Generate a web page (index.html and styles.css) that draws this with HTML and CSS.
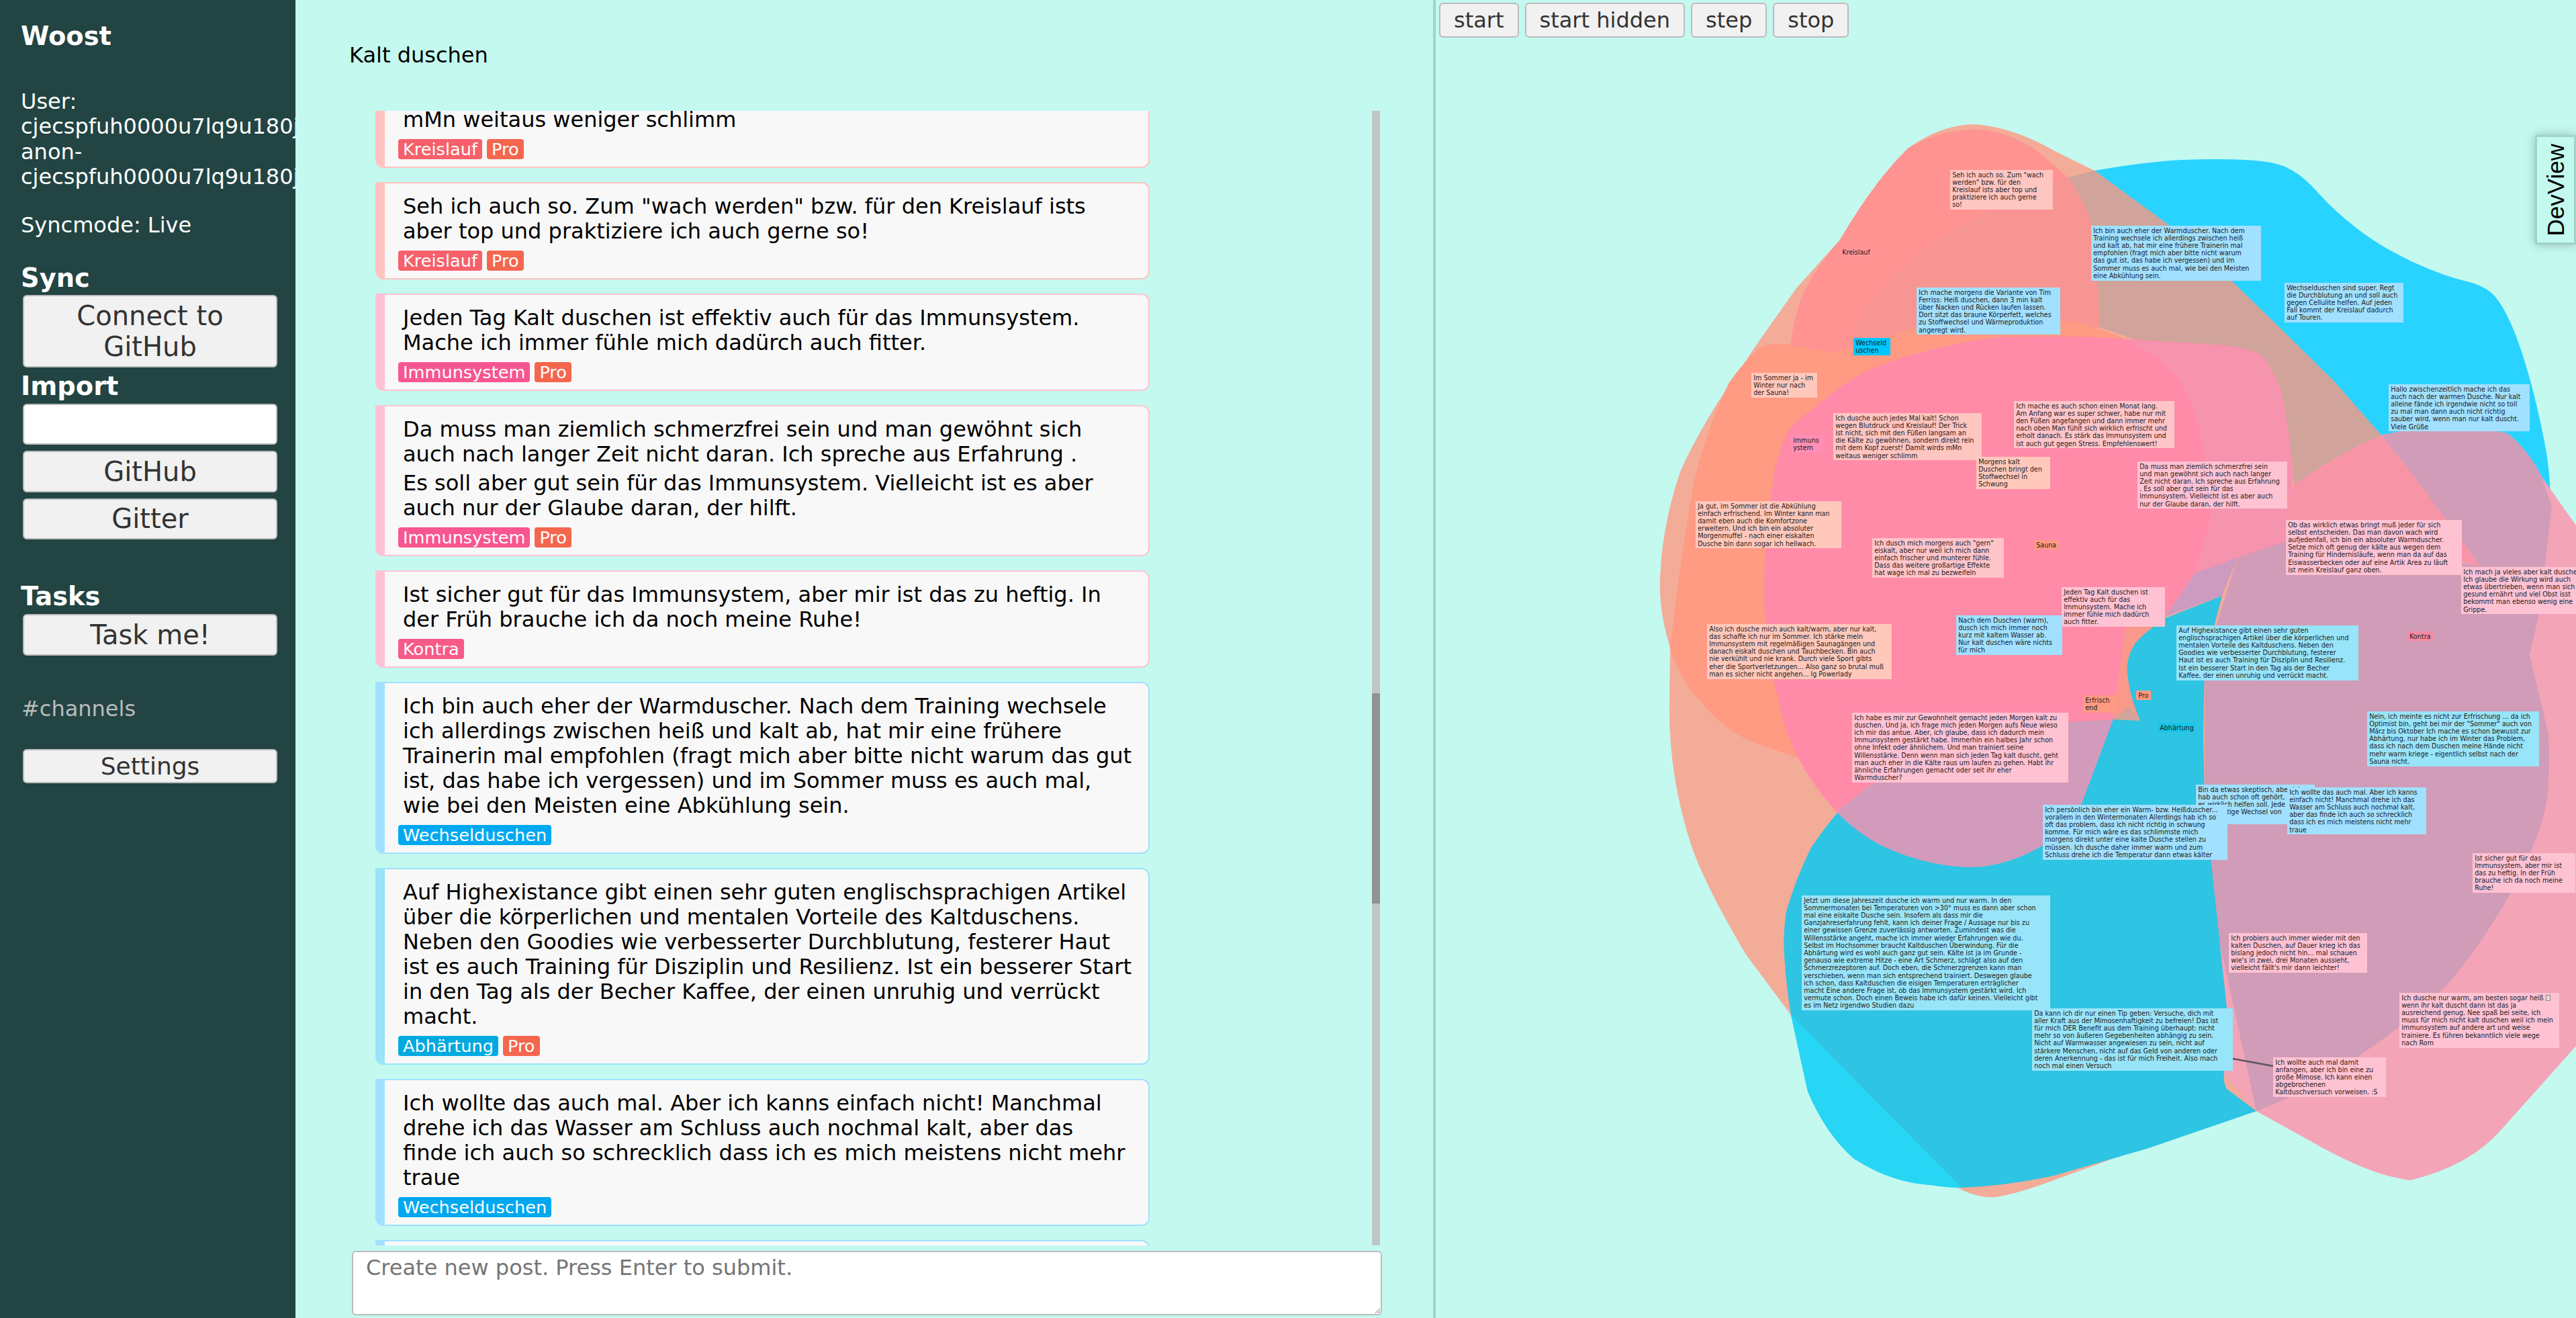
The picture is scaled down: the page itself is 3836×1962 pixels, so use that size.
FILE: index.html
```html
<!DOCTYPE html>
<html lang="de">
<head>
<meta charset="utf-8">
<title>Woost</title>
<link rel="stylesheet" href="styles.css">
</head>
<body>
<div class="app">
  <aside class="sidebar">
    <h1 class="brand">Woost</h1>
    <div class="user">User:<br>cjecspfuh0000u7lq9u180j<br>anon-<br>cjecspfuh0000u7lq9u180j</div>
    <div class="syncmode">Syncmode: Live</div>
    <h2 class="side-title title-sync">Sync</h2>
    <button class="btn side-btn">Connect to GitHub</button>
    <h2 class="side-title title-import">Import</h2>
    <div class="import-stack">
      <input class="side-input" type="text">
      <button class="btn side-btn">GitHub</button>
      <button class="btn side-btn">Gitter</button>
    </div>
    <h2 class="side-title title-tasks">Tasks</h2>
    <button class="btn side-btn">Task me!</button>
    <div class="channels">#channels</div>
    <button class="btn side-btn settings">Settings</button>
  </aside>

  <main class="chat">
    <header class="chat-head">Kalt duschen</header>
    <div class="thread">
      <div class="posts">
        <article class="post post-red post-first">
          <p>Ich dusche auch jedes Mal kalt! Schon wegen Blutdruck und Kreislauf! Der Trick ist nicht, sich mit den Füßen langsam an die Kälte zu gewöhnen, sondern direkt rein mit dem Kopf zuerst! Damit wirds<br>mMn weitaus weniger schlimm</p>
          <div class="tags"><span class="tag t-kreis">Kreislauf</span><span class="tag t-pro">Pro</span></div>
        </article>
        <article class="post post-red">
          <p>Seh ich auch so. Zum "wach werden" bzw. für den Kreislauf ists aber top und praktiziere ich auch gerne so!</p>
          <div class="tags"><span class="tag t-kreis">Kreislauf</span><span class="tag t-pro">Pro</span></div>
        </article>
        <article class="post post-pink">
          <p>Jeden Tag Kalt duschen ist effektiv auch für das Immunsystem. Mache ich immer fühle mich dadürch auch fitter.</p>
          <div class="tags"><span class="tag t-immun">Immunsystem</span><span class="tag t-pro">Pro</span></div>
        </article>
        <article class="post post-pink">
          <p>Da muss man ziemlich schmerzfrei sein und man gewöhnt sich auch nach langer Zeit nicht daran. Ich spreche aus Erfahrung .</p>
          <p>Es soll aber gut sein für das Immunsystem. Vielleicht ist es aber auch nur der Glaube daran, der hilft.</p>
          <div class="tags"><span class="tag t-immun">Immunsystem</span><span class="tag t-pro">Pro</span></div>
        </article>
        <article class="post post-pink">
          <p>Ist sicher gut für das Immunsystem, aber mir ist das zu heftig. In der Früh brauche ich da noch meine Ruhe!</p>
          <div class="tags"><span class="tag t-kontra">Kontra</span></div>
        </article>
        <article class="post post-blue">
          <p>Ich bin auch eher der Warmduscher. Nach dem Training wechsele ich allerdings zwischen heiß und kalt ab, hat mir eine frühere Trainerin mal empfohlen (fragt mich aber bitte nicht warum das gut ist, das habe ich vergessen) und im Sommer muss es auch mal, wie bei den Meisten eine Abkühlung sein.</p>
          <div class="tags"><span class="tag t-wech">Wechselduschen</span></div>
        </article>
        <article class="post post-aqua">
          <p>Auf Highexistance gibt einen sehr guten englischsprachigen Artikel über die körperlichen und mentalen Vorteile des Kaltduschens. Neben den Goodies wie verbesserter Durchblutung, festerer Haut ist es auch Training für Disziplin und Resilienz. Ist ein besserer Start in den Tag als der Becher Kaffee, der einen unruhig und verrückt macht.</p>
          <div class="tags"><span class="tag t-abh">Abhärtung</span><span class="tag t-pro">Pro</span></div>
        </article>
        <article class="post post-blue">
          <p>Ich wollte das auch mal. Aber ich kanns einfach nicht! Manchmal drehe ich das Wasser am Schluss auch nochmal kalt, aber das finde ich auch so schrecklich dass ich es mich meistens nicht mehr traue</p>
          <div class="tags"><span class="tag t-wech">Wechselduschen</span></div>
        </article>
        <article class="post post-blue post-last">
          <p>&nbsp;</p>
        </article>
      </div>
      <div class="scrolltrack"><div class="scrollthumb"></div></div>
    </div>
    <textarea class="composer" placeholder="Create new post. Press Enter to submit."></textarea>
  </main>

  <section class="pane">
    <div class="stage">
      <svg class="hulls" viewBox="0 0 3836 1962" xmlns="http://www.w3.org/2000/svg">
        <path class="h-wech" d="M3100,300 L3119,254 Q3200,240 3250,238 Q3297,236 3344,238 Q3391,240 3410,252 Q3429,261 3452,287 Q3476,314 3511,341 Q3546,368 3593,390 Q3640,411 3670,418 Q3701,425 3715,441 Q3729,457 3743,491 Q3757,525 3771,578 Q3785,632 3793,680 Q3800,729 3797,790 Q3795,850 3781,912 L3767,975 L3300,1000 Z"/>
        <path class="h-peach" d="M2942,185 Q3000,190 3060,225 L3119,254 L3231,336 L3325,420 L3400,493 L3476,568 L3546,648 L3588,700 L3694,843 L3767,975 Q3795,1060 3797,1130 Q3795,1200 3776,1250 Q3760,1290 3743,1321 Q3700,1400 3646,1464 Q3590,1520 3524,1564 Q3450,1620 3360,1654 L3165,1718 L3050,1760 Q3000,1778 2972,1782 Q2930,1785 2880,1745 L2667,1511 L2600,1421 Q2540,1320 2519,1260 Q2486,1160 2486,1057 L2487,964 Q2470,910 2472,861 Q2475,780 2503,700 Q2530,640 2574,575 L2620,507 L2675,429 L2740,357 Q2790,271 2841,221 Q2890,185 2942,185 Z"/>
        <path class="h-tan" d="M3079,264 L3119,254 L3231,336 L3325,420 L3400,493 L3476,568 L3546,648 L3417,721 L3396,579 L3126,487 L3123,436 L3116,340 Z"/>
        <path class="h-salmon" d="M2951,193 Q3000,198 3043,232 L3079,264 Q3105,300 3116,340 Q3125,400 3126,487 L2731,530 L2666,514 Q2672,470 2685,436 Q2710,390 2740,357 Q2790,271 2841,221 Q2895,190 2951,193 Z"/>
        <path class="h-salmon2" d="M2753,517 L2753,507 Q2775,465 2804,428 Q2835,392 2877,364 Q2920,335 2965,311 Q3020,285 3079,264 Q3105,300 3116,340 Q3125,400 3126,487 Z"/>
        <path class="h-orange" d="M2666,514 Q2640,508 2620,518 Q2595,540 2574,571 Q2545,630 2524,710 Q2510,790 2500,860 L2487,964 Q2505,1020 2533,1045 Q2570,1090 2617,1107 L2677,1128 L2800,1000 L3159,936 L3161,503 Q3130,490 3089,479 Q3000,470 2919,475 Q2860,485 2813,500 L2731,525 Z"/>
        <path class="h-lpink" d="M3433,710 Q3490,672 3546,648 Q3640,625 3734,645 Q3765,670 3785,710 L3836,782 L3836,1557 Q3780,1620 3727,1679 Q3680,1735 3589,1757 Q3530,1750 3443,1700 L3360,1654 L3312,1600 L3283,1000 Z"/>
        <path class="h-rose" d="M3417,721 L3433,710 Q3490,672 3546,648 L3588,700 L3694,843 Q3600,815 3500,808 Q3440,805 3400,807 L3332,830 Z"/>
        <path class="h-purple" d="M3546,648 Q3640,625 3734,645 Q3765,670 3785,710 L3800,754 L3781,914 L3767,975 L3795,1093 Q3797,1130 3795,1164 Q3795,1200 3776,1250 Q3760,1290 3743,1321 Q3700,1400 3646,1464 Q3590,1520 3524,1564 Q3450,1620 3360,1654 L3283,1300 L3283,986 L3332,830 L3400,807 Q3500,808 3694,843 L3588,700 Z"/>
        <path class="h-hot" d="M2735,1209 Q2700,1170 2678,1129 Q2655,1080 2648,1039 Q2630,980 2630,929 Q2625,890 2627,861 Q2630,780 2643,700 Q2650,670 2662,643 Q2675,625 2694,614 Q2730,580 2776,554 Q2820,535 2859,525 Q2915,510 2974,502 Q3050,500 3120,502 L3311,514 Q3350,518 3368,529 Q3385,550 3396,579 Q3410,640 3415,710 L3400,807 L3332,830 L3269,853 L3224,918 L3165,936 L3147,1071 L3080,1075 L2786,1168 Z"/>
        <path class="h-hot2" d="M3166,507 L3311,514 Q3350,518 3368,529 Q3385,550 3396,579 Q3410,640 3415,710 L3400,807 L3332,830 L3269,853 L3290,780 Q3290,650 3250,570 Q3215,525 3166,507 Z"/>
        <path class="h-sliver" d="M3224,918 L3269,853 L3332,830 L3309,887 Z"/>
        <path class="h-wedge" d="M3165,936 L3224,918 L3200,1073 L3147,1071 Z"/>
        <path class="h-tan" d="M3147,1071 L3170,1052 L3187,1073 Z"/>
        <path class="h-abh" d="M2735,1211 Q2715,1235 2698,1260 Q2675,1305 2660,1357 Q2655,1390 2657,1421 Q2660,1470 2667,1511 L2692,1625 Q2720,1690 2761,1725 Q2815,1760 2875,1764 Q2900,1768 2921,1768 Q2990,1765 3059,1750 L3200,1709 L3360,1654 L3316,1621 Q3310,1610 3312,1600 L3316,1500 L3293,1286 L3283,1200 L3281,1093 L3283,986 L3309,887 L3222,921 Q3190,945 3180,957 Q3165,980 3168,1003 Q3172,1040 3187,1073 L3147,1071 Z"/>
        <path class="h-cyan" d="M2667,1511 L2692,1625 Q2720,1690 2761,1725 Q2815,1760 2875,1764 Q2900,1768 2921,1768 Z"/>
        <path class="h-dome" d="M2735,1209 L2786,1168 L3080,1075 L3147,1071 L3100,1196 Q3070,1240 3045,1257 Q2990,1290 2935,1291 Q2870,1290 2804,1260 Q2765,1240 2735,1209 Z"/>
        <line class="edge" x1="3325" y1="1576" x2="3385" y2="1587"/>
      </svg>

      <div class="node n-red" style="left:2904px;top:253px;width:153px">Seh ich auch so. Zum "wach<br>werden" bzw. für den<br>Kreislauf ists aber top und<br>praktiziere ich auch gerne<br>so!</div>
      <div class="node l-kreis" style="left:2740px;top:368px;width:48px">Kreislauf</div>
      <div class="node n-blue" style="left:2854px;top:428px;width:214px">Ich mache morgens die Variante von Tim<br>Ferriss: Heiß duschen, dann 3 min kalt<br>über Nacken und Rücken laufen lassen.<br>Dort sitzt das braune Körperfett, welches<br>zu Stoffwechsel und Wärmeproduktion<br>angeregt wird.</div>
      <div class="node l-wech" style="left:2760px;top:503px;width:55px">Wechseld<br>uschen</div>
      <div class="node n-peach" style="left:2608px;top:555px;width:98px">Im Sommer ja - im<br>Winter nur nach<br>der Sauna!</div>
      <div class="node l-immun" style="left:2667px;top:648px;width:48px">Immuns<br>ystem</div>
      <div class="node n-red" style="left:2730px;top:615px;width:221px">Ich dusche auch jedes Mal kalt! Schon<br>wegen Blutdruck und Kreislauf! Der Trick<br>ist nicht, sich mit den Füßen langsam an<br>die Kälte zu gewöhnen, sondern direkt rein<br>mit dem Kopf zuerst! Damit wirds mMn<br>weitaus weniger schlimm</div>
      <div class="node n-rp" style="left:2999px;top:597px;width:239px">Ich mache es auch schon einen Monat lang.<br>Am Anfang war es super schwer, habe nur mit<br>den Füßen angefangen und dann immer mehr<br>nach oben Man fühlt sich wirklich erfrischt und<br>erholt danach. Es stärk das Immunsystem und<br>ist auch gut gegen Stress. Empfehlenswert!</div>
      <div class="node n-peach" style="left:2943px;top:680px;width:110px">Morgens kalt<br>Duschen bringt den<br>Stoffwechsel in<br>Schwung</div>
      <div class="node n-blue" style="left:3114px;top:336px;width:253px">Ich bin auch eher der Warmduscher. Nach dem<br>Training wechsele ich allerdings zwischen heiß<br>und kalt ab, hat mir eine frühere Trainerin mal<br>empfohlen (fragt mich aber bitte nicht warum<br>das gut ist, das habe ich vergessen) und im<br>Sommer muss es auch mal, wie bei den Meisten<br>eine Abkühlung sein.</div>
      <div class="node n-blue" style="left:3402px;top:421px;width:177px">Wechselduschen sind super. Regt<br>die Durchblutung an und soll auch<br>gegen Cellulite helfen. Auf jeden<br>Fall kommt der Kreislauf dadurch<br>auf Touren.</div>
      <div class="node n-blue" style="left:3557px;top:572px;width:210px">Hallo zwischenzeitlich mache ich das<br>auch nach der warmen Dusche. Nur kalt<br>alleine fände ich irgendwie nicht so toll<br>zu mal man dann auch nicht richtig<br>sauber wird, wenn man nur kalt duscht.<br>Viele Grüße</div>
      <div class="node n-pink" style="left:3183px;top:687px;width:223px">Da muss man ziemlich schmerzfrei sein<br>und man gewöhnt sich auch nach langer<br>Zeit nicht daran. Ich spreche aus Erfahrung<br>. Es soll aber gut sein für das<br>Immunsystem. Vielleicht ist es aber auch<br>nur der Glaube daran, der hilft.</div>
      <div class="node n-peach" style="left:2525px;top:746px;width:217px">Ja gut, im Sommer ist die Abkühlung<br>einfach erfrischend. Im Winter kann man<br>damit eben auch die Komfortzone<br>erweitern. Und ich bin ein absoluter<br>Morgenmuffel - nach einer eiskalten<br>Dusche bin dann sogar ich hellwach.</div>
      <div class="node n-rp" style="left:2788px;top:801px;width:196px">Ich dusch mich morgens auch "gern"<br>eiskalt, aber nur weil ich mich dann<br>einfach frischer und munterer fühle.<br>Dass das weitere großartige Effekte<br>hat wage ich mal zu bezweifeln</div>
      <div class="node l-orange" style="left:3029px;top:804px;width:37px">Sauna</div>
      <div class="node n-pink" style="left:3070px;top:874px;width:154px">Jeden Tag Kalt duschen ist<br>effektiv auch für das<br>Immunsystem. Mache ich<br>immer fühle mich dadürch<br>auch fitter.</div>
      <div class="node n-blue" style="left:2913px;top:916px;width:158px">Nach dem Duschen (warm),<br>dusch ich mich immer noch<br>kurz mit kaltem Wasser ab.<br>Nur kalt duschen wäre nichts<br>für mich</div>
      <div class="node n-peach" style="left:2542px;top:929px;width:275px">Also ich dusche mich auch kalt/warm, aber nur kalt,<br>das schaffe ich nur im Sommer. Ich stärke mein<br>Immunsystem mit regelmäßigen Saunagängen und<br>danach eiskalt duschen und Tauchbecken. Bin auch<br>nie verkühlt und nie krank. Durch viele Sport gibts<br>eher die Sportverletzungen... Also ganz so brutal muß<br>man es sicher nicht angehen... lg Powerlady</div>
      <div class="node l-orange" style="left:3102px;top:1035px;width:49px">Erfrisch<br>end</div>
      <div class="node n-pink" style="left:2758px;top:1061px;width:322px">Ich habe es mir zur Gewohnheit gemacht jeden Morgen kalt zu<br>duschen. Und ja, ich frage mich jeden Morgen aufs Neue wieso<br>ich mir das antue. Aber, ich glaube, dass ich dadurch mein<br>Immunsystem gestärkt habe. Immerhin ein halbes Jahr schon<br>ohne Infekt oder ähnlichem. Und man trainiert seine<br>Willensstärke. Denn wenn man sich jeden Tag kalt duscht, geht<br>man auch eher in die Kälte raus um laufen zu gehen. Habt ihr<br>ähnliche Erfahrungen gemacht oder seit ihr eher<br>Warmduscher?</div>
      <div class="node n-blue" style="left:3270px;top:1168px;width:177px">Bin da etwas skeptisch, aber ich<br>hab auch schon oft gehört, dass<br>es wirklich helfen soll. Jede<br>andersartige Wechsel von<br>Reizen.</div>
      <div class="node n-blue" style="left:3042px;top:1198px;width:275px">Ich persönlich bin eher ein Warm- bzw. Heißduscher...<br>vorallem in den Wintermonaten Allerdings hab ich so<br>oft das problem, dass ich nicht richtig in schwung<br>komme. Für mich wäre es das schlimmste mich<br>morgens direkt unter eine kalte Dusche stellen zu<br>müssen. Ich dusche daher immer warm und zum<br>Schluss drehe ich die Temperatur dann etwas kälter</div>
      <div class="node n-pink" style="left:3665px;top:844px;width:230px">Ich mach ja vieles aber kalt duschen nicht.<br>Ich glaube die Wirkung wird auch<br>etwas übertrieben, wenn man sich<br>gesund ernährt und viel Obst isst<br>bekommt man ebenso wenig eine<br>Grippe.</div>
      <div class="node n-pink" style="left:3404px;top:774px;width:262px">Ob das wirklich etwas bringt muß jeder für sich<br>selbst entscheiden. Das man davon wach wird<br>aufjedenfall, ich bin ein absoluter Warmduscher.<br>Setze mich oft genug der kälte aus wegen dem<br>Training für Hindernisläufe, wenn man da auf das<br>Eiswasserbecken oder auf eine Artik Area zu läuft<br>ist mein Kreislauf ganz oben.</div>
      <div class="node n-aqua" style="left:3241px;top:931px;width:271px">Auf Highexistance gibt einen sehr guten<br>englischsprachigen Artikel über die körperlichen und<br>mentalen Vorteile des Kaltduschens. Neben den<br>Goodies wie verbesserter Durchblutung, festerer<br>Haut ist es auch Training für Disziplin und Resilienz.<br>Ist ein besserer Start in den Tag als der Becher<br>Kaffee, der einen unruhig und verrückt macht.</div>
      <div class="node l-orange" style="left:3181px;top:1028px;width:22px">Pro</div>
      <div class="node l-abh" style="left:3213px;top:1076px;width:56px">Abhärtung</div>
      <div class="node l-kontra" style="left:3585px;top:940px;width:38px">Kontra</div>
      <div class="node n-aqua" style="left:3525px;top:1059px;width:256px">Nein, ich meinte es nicht zur Erfrischung ... da ich<br>Optimist bin, geht bei mir der "Sommer" auch von<br>März bis Oktober Ich mache es schon bewusst zur<br>Abhärtung, nur habe ich im Winter das Problem,<br>dass ich nach dem Duschen meine Hände nicht<br>mehr warm kriege - eigentlich selbst nach der<br>Sauna nicht.</div>
      <div class="node n-blue" style="left:3406px;top:1172px;width:207px">Ich wollte das auch mal. Aber ich kanns<br>einfach nicht! Manchmal drehe ich das<br>Wasser am Schluss auch nochmal kalt,<br>aber das finde ich auch so schrecklich<br>dass ich es mich meistens nicht mehr<br>traue</div>
      <div class="node n-aqua" style="left:2683px;top:1333px;width:370px">Jetzt um diese Jahreszeit dusche ich warm und nur warm. In den<br>Sommermonaten bei Temperaturen von &gt;30° muss es dann aber schon<br>mal eine eiskalte Dusche sein. Insofern als dass mir die<br>Ganzjahreserfahrung fehlt, kann ich deiner Frage / Aussage nur bis zu<br>einer gewissen Grenze zuverlässig antworten. Zumindest was die<br>Willensstärke angeht, mache ich immer wieder Erfahrungen wie du.<br>Selbst im Hochsommer braucht Kaltduschen Überwindung. Für die<br>Abhärtung wird es wohl auch ganz gut sein. Kälte ist ja im Grunde -<br>genauso wie extreme Hitze - eine Art Schmerz, schlägt also auf den<br>Schmerzrezeptoren auf. Doch eben, die Schmerzgrenzen kann man<br>verschieben, wenn man sich entsprechend trainiert. Deswegen glaube<br>ich schon, dass Kaltduschen die eisigen Temperaturen erträglicher<br>macht Eine andere Frage ist, ob das Immunsystem gestärkt wird. Ich<br>vermute schon. Doch einen Beweis habe ich dafür keinen. Vielleicht gibt<br>es im Netz irgendwo Studien dazu</div>
      <div class="node n-aqua" style="left:3026px;top:1501px;width:299px">Da kann ich dir nur einen Tip geben: Versuche, dich mit<br>aller Kraft aus der Mimosenhaftigkeit zu befreien! Das ist<br>für mich DER Benefit aus dem Training überhaupt: nicht<br>mehr so von äußeren Gegebenheiten abhängig zu sein.<br>Nicht auf Warmwasser angewiesen zu sein, nicht auf<br>stärkere Menschen, nicht auf das Geld von anderen oder<br>deren Anerkennung - das ist für mich Freiheit. Also mach<br>noch mal einen Versuch</div>
      <div class="node n-pink" style="left:3319px;top:1389px;width:206px">Ich probiers auch immer wieder mit den<br>kalten Duschen, auf Dauer krieg ich das<br>bislang jedoch nicht hin... mal schauen<br>wie's in zwei, drei Monaten aussieht,<br>vielleicht fällt's mir dann leichter!</div>
      <div class="node n-pink" style="left:3573px;top:1478px;width:238px">Ich dusche nur warm, am besten sogar heiß <span class="tofu"></span><br>wenn ihr kalt duscht dann ist das ja<br>ausreichend genug. Nee spaß bei seite, ich<br>muss für mich nicht kalt duschen weil ich mein<br>immunsystem auf andere art und weise<br>trainiere. Es führen bekanntlich viele wege<br>nach Rom</div>
      <div class="node n-pink" style="left:3385px;top:1574px;width:168px">Ich wollte auch mal damit<br>anfangen, aber ich bin eine zu<br>große Mimose. Ich kann einen<br>abgebrochenen<br>Kaltduschversuch vorweisen. :S</div>
      <div class="node n-pink" style="left:3682px;top:1270px;width:153px">Ist sicher gut für das<br>Immunsystem, aber mir ist<br>das zu heftig. In der Früh<br>brauche ich da noch meine<br>Ruhe!</div>
    </div>

    <div class="toolbar">
      <button class="btn tool">start</button>
      <button class="btn tool">start hidden</button>
      <button class="btn tool">step</button>
      <button class="btn tool">stop</button>
    </div>
    <div class="devview"><span class="devview-label">DevView</span></div>
  </section>
</div>
</body>
</html>
```

FILE: styles.css
```css
* { box-sizing: border-box; }
html, body { margin: 0; padding: 0; height: 100%; }
body {
  background: #c4f9f0;
  font-family: "DejaVu Sans", sans-serif;
  font-size: 32px;
  line-height: 37.25px;
  color: #000;
  overflow: hidden;
}
.app {
  display: grid;
  grid-template-columns: 440px 1694px 1fr;
  height: 1962px;
  width: 3836px;
}

/* sidebar */
.sidebar {
  background: #224443;
  color: #fff;
  padding: 31px 0 0 31px;
  overflow: hidden;
  display: flex;
  flex-direction: column;
  align-items: flex-start;
}
.brand { margin: 0; font-size: 38.4px; font-weight: 700; line-height: 45px; }
.user { margin-top: 57px; width: 379px; }
.syncmode { margin-top: 35px; }
.side-title { margin: 0; font-size: 38.4px; font-weight: 700; line-height: 45px; }
.title-sync { margin-top: 37px; margin-bottom: 3px; }
.title-import { margin-top: 5px; margin-bottom: 4px; }
.title-tasks { margin-top: 62px; margin-bottom: 4px; }
.import-stack { display: flex; flex-direction: column; gap: 9px; }
.btn {
  font-family: "DejaVu Sans", sans-serif;
  color: #333;
  background: #f1f1f1;
  border: 2px solid #bbb;
  border-radius: 6px;
  cursor: pointer;
}
.side-btn {
  display: block;
  width: 379px;
  margin-left: 3px;
  font-size: 40px;
  line-height: 46.5px;
  padding: 5.5px 8px;
}
.side-input {
  display: block;
  width: 379px;
  height: 61px;
  margin-left: 3px;
  background: #fff;
  border: 2px solid #bbb;
  border-radius: 6px;
}
.channels { margin-top: 61px; margin-left: 1px; color: #bbb; }
.side-btn.settings { margin-top: 41px; font-size: 36px; line-height: 42px; padding: 2.5px 8px; }

/* chat column */
.chat { display: flex; flex-direction: column; min-width: 0; height: 1962px; }
.chat-head {
  height: 165px;
  display: flex;
  align-items: center;
  padding-left: 80px;
}
.thread {
  height: 1689px;
  width: 1615px;
  padding-left: 119px;
  display: flex;
  justify-content: space-between;
  overflow: hidden;
}
.posts {
  width: 1153px;
  overflow: hidden;
  display: flex;
  flex-direction: column;
  gap: 21px;
}
.post {
  flex: none;
  background: #f8f8f8;
  border: 2px solid #a1e0ff;
  border-left-width: 14px;
  border-radius: 0 12px 12px 12px;
  padding: 16px 23px 11px 27px;
}
.post-first { margin-top: -171px; }
.post-last { min-height: 200px; }
.post p { margin: 0 0 6px; line-height: 37px; }
.post p:last-of-type { margin-bottom: 10px; }
.post-red { border-color: #ffc4c1; }
.post-pink { border-color: #ffc2d3; }
.post-blue { border-color: #a1e0ff; }
.post-aqua { border-color: #98e4f9; }
.tags { display: flex; gap: 7px; margin-left: -7px; }
.tag {
  color: #fff;
  font-size: 25.6px;
  line-height: 30px;
  height: 30px;
  padding: 0 7px;
  border-radius: 4px;
}
.t-kreis { background: #f7606a; }
.t-pro { background: #f4674e; }
.t-immun { background: #f85690; }
.t-kontra { background: #f85a88; }
.t-wech { background: #00a8f0; }
.t-abh { background: #00aadf; }

.scrolltrack { width: 12px; height: 100%; background: #c0c6c4; }
.scrollthumb { width: 12px; height: 313px; margin-top: 867px; background: #8f9493; }

.composer {
  display: block;
  width: 1534px;
  height: 96px;
  margin: 8px 0 0 84px;
  padding: 5px 19px;
  background: #fff;
  border: 2px solid #bbb;
  border-radius: 6px;
  font-family: "DejaVu Sans", sans-serif;
  font-size: 32px;
  line-height: 37.25px;
}
.composer::placeholder { color: #757575; opacity: 1; }

/* graph pane */
.pane {
  position: relative;
  border-left: 4px solid #9ed4c9;
  overflow: hidden;
  min-width: 0;
}
.toolbar { position: relative; display: flex; gap: 9px; padding: 4px 0 0 5px; }
.tool { font-size: 32px; height: 52px; padding: 0 20px; line-height: 1; }
.stage { position: absolute; left: -2138px; top: 0; width: 3836px; height: 1962px; }
.hulls { position: absolute; left: 0; top: 0; width: 3836px; height: 1962px; display: block; }
.h-wech { fill: #29d3ff; }
.h-peach { fill: #f3ac98; }
.h-tan { fill: #d0a49a; }
.h-salmon { fill: #ff9391; }
.h-salmon2 { fill: #f69592; }
.h-orange { fill: #ff9a83; }
.h-lpink { fill: #f4a4b7; }
.h-rose { fill: #f795a6; }
.h-purple { fill: #d19cb7; }
.h-hot { fill: #ff8ba9; }
.h-hot2 { fill: #f693ae; }
.h-sliver { fill: #cd9bc0; }
.h-wedge { fill: #f9998a; }
.h-abh { fill: #2ec4e3; }
.h-cyan { fill: #27d6f4; }
.h-dome { fill: #d29abb; }
.edge { stroke: #5a5560; stroke-width: 2.5; }

.node {
  position: absolute;
  padding: 1.6px 3.2px;
  font-size: 9.6px;
  line-height: 11.2px;
  color: #1a1a22;
  white-space: nowrap;
  overflow: hidden;
}
.n-red { background: #ffc5c0; }
.n-rp { background: #ffc4c8; }
.n-peach { background: #ffc8bb; }
.n-pink { background: #ffc2d3; }
.n-blue { background: #a1e0ff; }
.n-aqua { background: #98e4f9; }
.l-kreis { background: #ff9598; }
.l-wech { background: #00c8ff; }
.l-immun { background: #ff8fb5; }
.l-orange { background: #ff9a83; }
.l-abh { background: #17c7ea; }
.l-kontra { background: #f78aa4; }
.tofu {
  display: inline-block;
  width: 7px;
  height: 9px;
  border: 1px solid #888;
  background: #ddd;
  vertical-align: -1px;
}

/* dev tab */
.devview {
  position: absolute;
  right: 0;
  top: 201px;
  width: 61px;
  height: 163px;
  display: flex;
  align-items: center;
  justify-content: center;
  background: #c4f9f0;
  border: 3px solid #9ed4c9;
  box-shadow: 0 0 14px rgba(0, 0, 0, .25);
}
.devview-label {
  writing-mode: vertical-rl;
  transform: rotate(180deg);
  font-family: "Liberation Sans", Arial, sans-serif;
  font-size: 35px;
  line-height: 1;
  color: #000;
}
```
